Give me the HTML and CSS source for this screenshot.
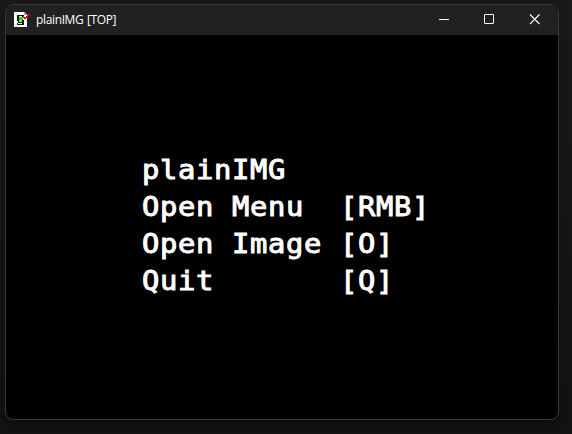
FILE: index.html
```html
<!DOCTYPE html>
<html lang="en">
<head>
<meta charset="utf-8">
<title>plainIMG</title>
<link rel="stylesheet" href="styles.css">
</head>
<body>
<main class="window">
  <header class="titlebar">
    <svg class="app-icon" width="16" height="16" viewBox="0 0 16 16" shape-rendering="crispEdges">
      <path d="M0 0h10l3 3v12H0z" fill="#fff"/>
      <path d="M10 0v3h3z" fill="#aaa"/>
      <path d="M3 3h7v3h-1v2h1v5H3v-2h1V9H3z" fill="#111"/>
      <path d="M5 4h3v1H5zM4 11h4v1H4z" fill="#f4e89a"/>
      <path d="M5 5h4v3H5z" fill="#18d818"/>
      <path d="M5 8h3v2H5z" fill="#8bed38"/>
      <path d="M9 4h1v1h2V4h1V3h1V2h2v1h-1v1h-1v1h-1v1h-1v1h-2V6H9z" fill="#f20d0d"/>
    </svg>
    <span class="title">plainIMG [TOP]</span>
    <div class="controls">
      <svg width="46" height="30" viewBox="0 0 46 30"><path d="M19 14.5h10" stroke="#fff"/></svg>
      <svg width="46" height="30" viewBox="0 0 46 30"><rect x="18.5" y="9.5" width="9" height="9" rx=".5" fill="none" stroke="#fff"/></svg>
      <svg width="46" height="30" viewBox="0 0 46 30"><path d="M18 9.5l9.5 9.5m0-9.5L18 19" fill="none" stroke="#fff" stroke-width="1.1"/></svg>
    </div>
  </header>
  <pre class="menu">plainIMG
Open Menu  [RMB]
Open Image [O]
Quit       [Q]</pre>
</main>
</body>
</html>
```
FILE: styles.css
```css
body {
  display: flex;
  margin: 0;
  height: 434px;
  overflow: hidden;
  background: linear-gradient(#191919, #121212);
}
.window {
  box-sizing: border-box;
  width: 554px;
  height: 416px;
  margin: 4px 0 0 5px;
  border: 1px solid #3a3a3a;
  border-radius: 8px;
  background: #000;
  overflow: hidden;
  box-shadow: 0 3px 10px rgba(0, 0, 0, .3);
}
.titlebar {
  display: flex;
  align-items: center;
  height: 30px;
  padding-left: 8px;
  background: #202122;
  color: #fff;
}
.app-icon { display: block; margin-right: 6px; }
.title {
  font: 12px/16px "Open Sans", sans-serif;
  letter-spacing: -.36px;
  word-spacing: .8px;
}
.controls { display: flex; margin-left: auto; }
.menu {
  margin: 116px 0 0 135.5px;
  color: #fff;
  font: 27px/37px "DejaVu Sans Mono", monospace;
  letter-spacing: .65px;
  -webkit-text-stroke: 1px #fff;
  transform: scaleX(1.065);
  transform-origin: 0 0;
}
```
